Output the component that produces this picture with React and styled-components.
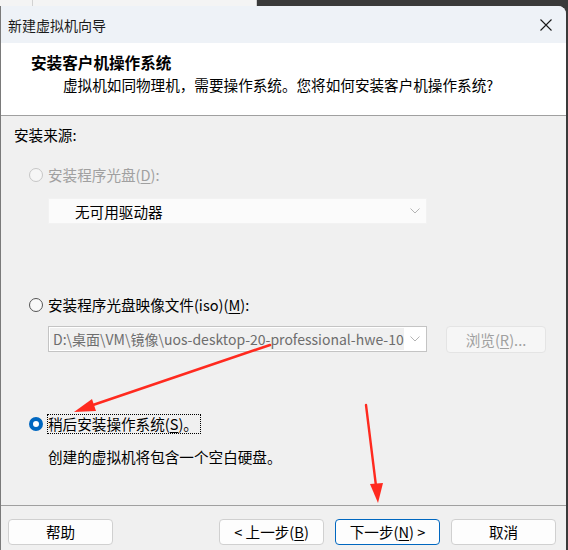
import React from "react"
import styled, { createGlobalStyle } from "styled-components"

const GlobalStyle = createGlobalStyle`
  body {
    margin: 0;
    background: #3a3a3a;
    font-family: "Noto Sans CJK SC", "Noto Sans", sans-serif;
    font-size: 14.6px;
    color: #000;
  }
`

const Page = styled.div`
  position: relative;
  width: 568px;
  height: 550px;
  overflow: hidden;
  display: flex;
  flex-direction: column;
  background: #3a3a3a;
`

const Backdrop = styled.div`
  height: 6px;
  width: 257px;
  background: #f4f4f4;
  box-sizing: border-box;
  border-right: 1px solid #cfcfcf;
  display: flex;
`

const BackdropTab = styled.div`
  width: 32px;
  border-right: 1px solid #d2d2d2;
`

const Window = styled.div`
  flex: 1;
  width: 566px;
  display: flex;
  flex-direction: column;
  border-radius: 0 8px 0 0;
  overflow: hidden;
  box-sizing: border-box;
  border-left: 1px solid #7a7a7a;
  background: #f0f0f0;
`

const TitleBar = styled.div`
  height: 37px;
  flex-shrink: 0;
  display: flex;
  align-items: center;
  justify-content: space-between;
  padding: 0 14px 0 7px;
  background: #eef2f7;
  font-size: 14px;
  color: #1a1a1a;
`

const Header = styled.div`
  height: 73px;
  box-sizing: border-box;
  flex-shrink: 0;
  background: #fff;
  border-bottom: 1px solid #a0a0a0;
  padding: 9px 0 0 30px;
`

const HeaderTitle = styled.div`
  font-weight: 700;
  font-size: 15.6px;
  line-height: 20px;
`

const HeaderText = styled.div`
  margin: 3px 0 0 32px;
  line-height: 20px;
`

const Body = styled.div`
  flex: 1;
  padding: 9px 0 0 13px;
  display: flex;
  flex-direction: column;
`

const Line = styled.div`
  line-height: 20px;
  margin-top: ${p => p.$top || 0}px;
  margin-left: ${p => p.$indent || 0}px;
`

const RadioRow = styled.div`
  display: flex;
  align-items: center;
  gap: 5px;
  height: 20px;
  margin: ${p => p.$top}px 0 0 15px;
  color: ${p => p.$disabled ? "#a0a0a0" : "#000"};
`

const RadioDot = styled.span`
  width: 14px;
  height: 14px;
  border-radius: 50%;
  box-sizing: border-box;
  flex-shrink: 0;
  ${p => p.$checked
    ? "border: 4px solid #0067c0; background: #fff;"
    : p.$disabled
      ? "border: 1px solid #c6c6c6; background: #f6f6f6;"
      : "border: 1px solid #555; background: #f9f9f9;"}
`

const RadioLabel = styled.span`
  line-height: 18px;
  padding: 0 2px 0 0;
  border: 1px dotted ${p => p.$focus ? "#000" : "transparent"};
  margin-left: -1px;
`

const U = styled.span`
  text-decoration: underline;
  text-underline-offset: 2px;
`

const Select = styled.div`
  margin: 13px 0 0 34px;
  width: 379px;
  height: 26px;
  box-sizing: border-box;
  background: #fbfbfb;
  border: 1px solid #f2f2f2;
  display: flex;
  align-items: center;
  justify-content: space-between;
  padding: 0 6px 0 26px;
`

const FileRow = styled.div`
  margin: 11px 0 0 34px;
  display: flex;
  gap: 19px;
`

const Combo = styled.div`
  width: 379px;
  height: 26px;
  box-sizing: border-box;
  border: 1px solid #c4c4c4;
  background: #fff;
  display: flex;
  align-items: center;
  padding: 1px 6px 1px 1px;
  gap: 6px;
`

const ComboField = styled.div`
  flex: 1;
  height: 100%;
  background: #f0f0f0;
  color: #6d6d6d;
  font-size: 14px;
  line-height: 22px;
  padding-left: 3px;
  overflow: hidden;
  white-space: nowrap;
`

const Button = styled.button`
  height: ${p => p.$tall ? 27 : 26}px;
  width: ${p => p.$wide ? 100 : 105}px;
  flex-shrink: 0;
  box-sizing: border-box;
  border-radius: 4px;
  border: 1px solid ${p => p.$primary ? "#0067c0" : p.$disabled ? "#e4e4e4" : "#d0d0d0"};
  background: ${p => p.$disabled ? "#f6f6f6" : "#fdfdfd"};
  color: ${p => p.$disabled ? "#a0a0a0" : "#000"};
  font: inherit;
  line-height: 20px;
  white-space: nowrap;
  padding: 0;
  margin-left: ${p => p.$push ? "auto" : "0"};
`

const Footer = styled.div`
  flex-shrink: 0;
  border-top: 1px solid #a0a0a0;
  padding: 13px 10px 5px 7px;
  display: flex;
  gap: 11px;
`

const Arrows = styled.svg`
  position: absolute;
  left: 0;
  top: 0;
  pointer-events: none;
`

const Chevron = ({ color }) => (
  <svg width="10" height="6" viewBox="0 0 10 6">
    <path d="M0.5 0.5 L5 5 L9.5 0.5" fill="none" stroke={color} strokeWidth="1" />
  </svg>
)

export default function App() {
  return (
    <Page>
      <GlobalStyle />
      <Backdrop><BackdropTab /></Backdrop>
      <Window>
        <TitleBar>
          <span>新建虚拟机向导</span>
          <svg width="12" height="12" viewBox="0 0 12 12">
            <path d="M0.5 0.5 L11.5 11.5 M11.5 0.5 L0.5 11.5" stroke="#1a1a1a" strokeWidth="1.1" />
          </svg>
        </TitleBar>
        <Header>
          <HeaderTitle>安装客户机操作系统</HeaderTitle>
          <HeaderText>虚拟机如同物理机，需要操作系统。您将如何安装客户机操作系统?</HeaderText>
        </Header>
        <Body>
          <Line>安装来源:</Line>
          <RadioRow $top={20} $disabled>
            <RadioDot $disabled />
            <RadioLabel>安装程序光盘(<U>D</U>):</RadioLabel>
          </RadioRow>
          <Select>
            <span>无可用驱动器</span>
            <Chevron color="#b4b4b4" />
          </Select>
          <RadioRow $top={71}>
            <RadioDot />
            <RadioLabel>安装程序光盘映像文件(iso)(<U>M</U>):</RadioLabel>
          </RadioRow>
          <FileRow>
            <Combo>
              <ComboField>D:\桌面\VM\镜像\uos-desktop-20-professional-hwe-1050-amd64.iso</ComboField>
              <Chevron color="#b4b4b4" />
            </Combo>
            <Button $disabled $wide $tall>浏览(<U>R</U>)...</Button>
          </FileRow>
          <RadioRow $top={61}>
            <RadioDot $checked />
            <RadioLabel $focus>稍后安装操作系统(<U>S</U>)。</RadioLabel>
          </RadioRow>
          <Line $top={13} $indent={34}>创建的虚拟机将包含一个空白硬盘。</Line>
        </Body>
        <Footer>
          <Button>帮助</Button>
          <Button $push>&lt; 上一步(<U>B</U>)</Button>
          <Button $primary>下一步(<U>N</U>) &gt;</Button>
          <Button>取消</Button>
        </Footer>
      </Window>
      <Arrows width="568" height="550" viewBox="0 0 568 550">
        <path d="M270 345 L90 406" stroke="#ff2a1f" strokeWidth="2.6" strokeLinecap="round" />
        <path d="M74 412 L92 399 L96 411 Z" fill="#ff2a1f" />
        <path d="M366 405 L376 486" stroke="#ff2a1f" strokeWidth="2.4" strokeLinecap="round" />
        <path d="M378 503 L370 484 L383 483 Z" fill="#ff2a1f" />
      </Arrows>
    </Page>
  )
}
